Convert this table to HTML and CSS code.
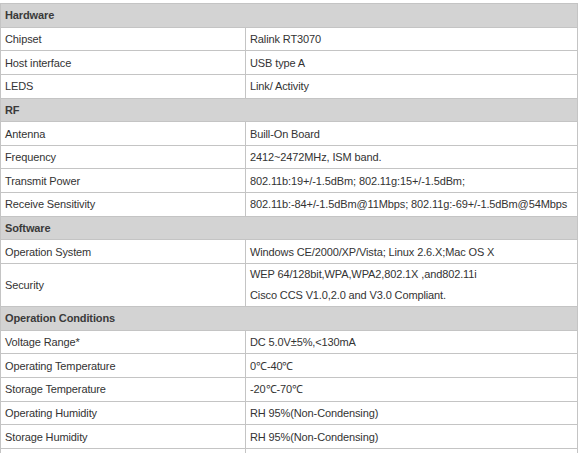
FILE: index.html
```html
<!DOCTYPE html>
<html>
<head>
<meta charset="utf-8">
<link rel="stylesheet" href="styles.css">
</head>
<body>
<table class="spec">
  <colgroup><col class="key-col"><col class="val-col"></colgroup>
  <tr class="group"><td colspan="2">Hardware</td></tr>
  <tr><td>Chipset</td><td>Ralink RT3070</td></tr>
  <tr><td>Host interface</td><td>USB type A</td></tr>
  <tr><td>LEDS</td><td>Link/ Activity</td></tr>
  <tr class="group"><td colspan="2">RF</td></tr>
  <tr><td>Antenna</td><td>Buill-On Board</td></tr>
  <tr><td>Frequency</td><td>2412~2472MHz, ISM band.</td></tr>
  <tr><td>Transmit Power</td><td>802.11b:19+/-1.5dBm; 802.11g:15+/-1.5dBm;</td></tr>
  <tr><td>Receive Sensitivity</td><td class="nowrap">802.11b:-84+/-1.5dBm@11Mbps; 802.11g:-69+/-1.5dBm@54Mbps</td></tr>
  <tr class="group"><td colspan="2">Software</td></tr>
  <tr><td>Operation System</td><td>Windows CE/2000/XP/Vista; Linux 2.6.X;Mac OS X</td></tr>
  <tr class="tall"><td>Security</td><td>WEP 64/128bit,WPA,WPA2,802.1X ,and802.11i<br>Cisco CCS V1.0,2.0 and V3.0 Compliant.</td></tr>
  <tr class="group"><td colspan="2">Operation Conditions</td></tr>
  <tr><td>Voltage Range*</td><td>DC 5.0V±5%,&lt;130mA</td></tr>
  <tr><td>Operating Temperature</td><td>0℃-40℃</td></tr>
  <tr><td>Storage Temperature</td><td>-20℃-70℃</td></tr>
  <tr><td>Operating Humidity</td><td>RH 95%(Non-Condensing)</td></tr>
  <tr><td>Storage Humidity</td><td>RH 95%(Non-Condensing)</td></tr>
  <tr><td></td><td></td></tr>
</table>
</body>
</html>
```
FILE: styles.css
```css
html, body {
  margin: 0;
  padding: 0;
  background: #ffffff;
}
body {
  padding-top: 3px;
  font-family: "Liberation Sans", Arial, sans-serif;
  font-size: 11px;
  letter-spacing: -0.12px;
  color: #333333;
  overflow: hidden;
}
.spec {
  width: 578px;
  border-collapse: collapse;
  table-layout: fixed;
}
.key-col {
  width: 245px;
}
.spec td {
  border: 1px solid #c4c4c4;
  height: 22.65px;
  padding: 0 4px;
  vertical-align: middle;
  line-height: 14px;
  overflow: hidden;
}
.spec td.nowrap {
  white-space: nowrap;
}
.spec tr.group td {
  background: #d3d3d3;
  font-weight: bold;
  color: #3a3a3a;
}
.spec tr.tall td {
  height: 41px;
  line-height: 21px;
}
```
